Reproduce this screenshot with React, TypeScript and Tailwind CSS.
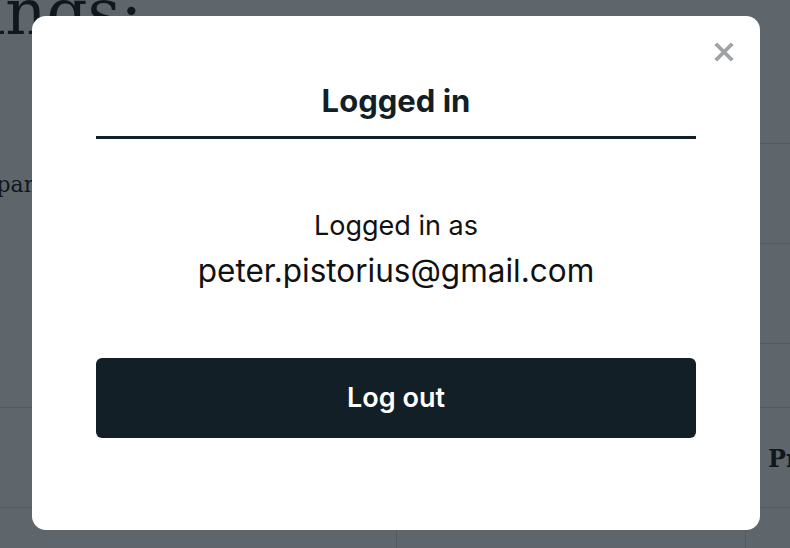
import React from "react";

export default function App() {
  return (
    <div className="relative h-[548px] w-[790px] overflow-hidden bg-[#5f666b]" style={{ fontFamily: "Inter, 'Noto Sans', sans-serif" }}>
      {/* dimmed page underneath */}
      <div className="text-[#11181d]" style={{ fontFamily: "'DejaVu Serif', serif" }}>
        <div className="mt-[-20px] ml-[-178px] text-[64px] leading-[64px] whitespace-nowrap">Bookings:</div>
        <div className="flex">
          <div className="w-[420px] shrink-0 pt-[125px] ml-[-50px] text-[22px] leading-[32px] whitespace-nowrap">company</div>
          <div className="flex-1 pt-[99px]">
            <div className="h-[100px] border-t border-[#545b60]" />
            <div className="h-[100px] border-t border-[#545b60]" />
            <div className="h-[64px] border-t border-[#545b60]" />
          </div>
        </div>
        <div className="flex h-[100px] border-t border-[#545b60]">
          <div className="w-[397px] shrink-0" />
          <div className="w-[349px] shrink-0" />
          <div className="flex-1 pt-[35px] pl-[22px] text-[24px] leading-[32px] font-bold whitespace-nowrap">Price</div>
        </div>
        <div className="flex h-[60px] border-t border-[#545b60]">
          <div className="w-[397px] shrink-0 border-r border-[#545b60]" />
          <div className="w-[349px] shrink-0 border-r border-[#545b60]" />
          <div className="flex-1" />
        </div>
      </div>

      {/* overlay + modal */}
      <div className="absolute inset-0 pl-[32px] pt-[16px]">
        <div className="relative flex h-[514px] w-[728px] flex-col items-center rounded-[14px] bg-white px-[64px] pt-[66px] text-[#131f26]">
          <button className="absolute right-[25px] top-[25px] flex h-[22px] w-[22px] items-center justify-center text-[#9ea2a5]">
            <svg width="24" height="24" viewBox="0 0 24 24" fill="none">
              <path d="M3 3L21 21M21 3L3 21" stroke="currentColor" strokeWidth="4.2" />
            </svg>
          </button>
          <div className="w-full border-b-[3px] border-[#131f26] pb-[17px] text-center text-[31px] font-bold leading-[37px]">
            Logged in
          </div>
          <div className="mt-[70px] text-center text-[27px] leading-[34px] text-[#111111]">Logged in as</div>
          <div className="mt-[9px] text-center text-[31.5px] leading-[38px] text-[#111111]">peter.pistorius@gmail.com</div>
          <button className="mt-[68px] flex h-[80px] w-full items-center justify-center rounded-[6px] bg-[#131f26] text-[27px] font-semibold text-white">
            Log out
          </button>
        </div>
      </div>
    </div>
  );
}
